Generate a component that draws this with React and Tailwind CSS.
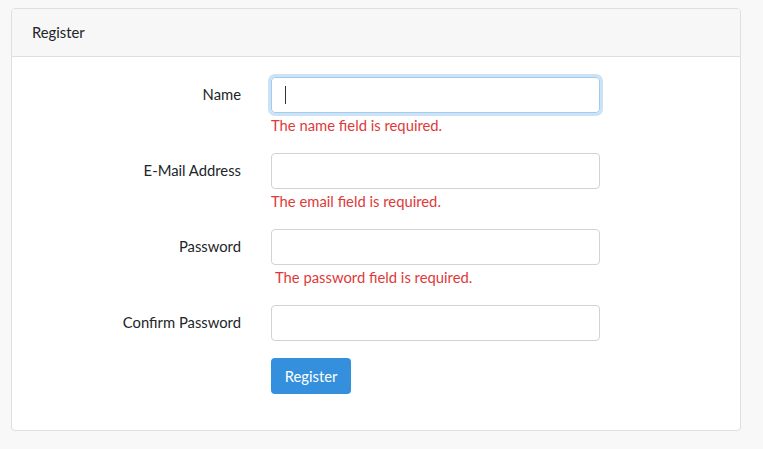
export default function App() {
  const rows = [
    { label: "Name", error: "The name field is required.", focused: true },
    { label: "E-Mail Address", error: "The email field is required." },
    { label: "Password", error: "The password field is required.", indent: true },
    { label: "Confirm Password" },
  ];

  return (
    <main
      className="min-h-screen bg-[#f8f8f8] px-[11px] pt-[8px] text-[14.8px] text-[#212529]"
      style={{ fontFamily: "Lato, 'Noto Sans', sans-serif" }}
    >
      <div className="w-[730px] overflow-hidden rounded border border-[#dfdfdf] bg-white">
        <div className="flex h-[48px] items-center border-b border-[#dfdfdf] bg-[#f7f7f7] px-[20px]">
          Register
        </div>

        <div className="p-[20px]">
          {rows.map((row) => (
            <div key={row.label} className="mb-[16px] flex">
              <div className="w-[209px] pt-[6px] text-right leading-[22px]">{row.label}</div>
              <div className="ml-[30px] w-[329px]">
                <div
                  className={
                    row.focused
                      ? "flex h-[36px] items-center rounded border border-[#a1cbef] px-[13px] shadow-[0_0_0_3px_rgba(52,144,220,0.25)]"
                      : "h-[36px] rounded border border-[#ced4da]"
                  }
                >
                  {row.focused && <span className="h-[18px] w-px bg-[#333]" />}
                </div>
                {row.error && (
                  <div
                    className={
                      "mt-[2px] pb-[2px] leading-[20px] text-[#e0393a]" + (row.indent ? " pl-[4px]" : "")
                    }
                  >
                    {row.error}
                  </div>
                )}
              </div>
            </div>
          ))}

          <div className="ml-[239px] pt-px pb-[16px]">
            <button className="h-[36px] w-[80px] rounded bg-[#3490dc] text-white">Register</button>
          </div>
        </div>
      </div>
    </main>
  );
}
